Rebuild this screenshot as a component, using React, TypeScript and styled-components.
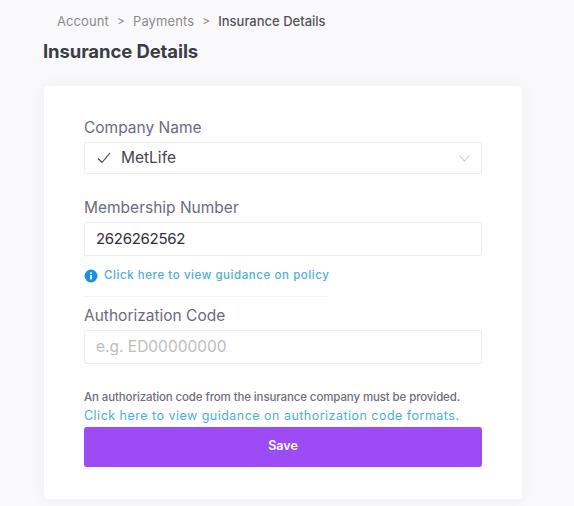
import React from "react";
import styled, { createGlobalStyle } from "styled-components";

const Global = createGlobalStyle`
  html, body { margin: 0; padding: 0; background: #f9f9fb; }
  body { font-family: "Inter", "Liberation Sans", sans-serif; -webkit-font-smoothing: antialiased; }
`;

const Page = styled.div`
  width: 574px;
  height: 506px;
  box-sizing: border-box;
  padding: 12px 52px 0 44px;
  overflow: hidden;
`;

const Breadcrumb = styled.nav`
  display: flex;
  align-items: center;
  height: 17px;
  padding-left: 13px;
  font-size: 13px;
  letter-spacing: 0.1px;
`;

const Crumb = styled.span<{ $current?: boolean }>`
  color: ${(p) => (p.$current ? "#55535a" : "#8f8b88")};
  font-weight: ${(p) => (p.$current ? 500 : 400)};
  letter-spacing: ${(p) => (p.$current ? "0" : "0.1px")};
`;

const Separator = styled.span`
  color: #8f8b88;
  margin: 0 8px;
  font-size: 12px;
`;

const Title = styled.h1`
  margin: 11px 0 24px -1px;
  font-size: 18.5px;
  line-height: 22px;
  font-weight: 650;
  color: #3d3d45;
  letter-spacing: -0.1px;
`;

const Card = styled.section`
  background: #fff;
  border-radius: 4px;
  box-shadow: 0 0 16px rgba(60, 60, 90, 0.05);
  padding: 30px 40px;
  height: 413px;
  box-sizing: border-box;
`;

const Label = styled.div`
  font-size: 15.5px;
  line-height: 24px;
  margin-bottom: 2px;
  font-weight: 400;
  color: #6c6b7b;
`;

const SelectBox = styled.div`
  height: 32px;
  box-sizing: border-box;
  border: 1px solid #ececf0;
  border-radius: 2px;
  display: flex;
  align-items: center;
  padding: 0 11px 0 12px;
  font-size: 15.5px;
  color: #45454c;
  margin-bottom: 22px;
`;

const SelectValue = styled.span`
  flex: 1;
  margin-left: 10px;
  padding-bottom: 2px;
`;

const Input = styled.input`
  display: block;
  width: 100%;
  height: 34px;
  box-sizing: border-box;
  border: 1px solid #ececf0;
  border-radius: 2px;
  padding: 0 11px 1px;
  font-family: inherit;
  font-size: 15px;
  letter-spacing: -0.3px;
  color: #2f2f36;
  background: #fff;
  outline: none;
  &::placeholder { color: #bdbdbd; opacity: 1; font-size: 15.5px; letter-spacing: 0; }
`;

const Guidance = styled.div`
  display: flex;
  align-items: center;
  gap: 6px;
  margin-top: 12px;
  font-size: 11.5px;
  font-weight: 500;
  letter-spacing: 0.57px;
  color: #4eaed6;
  line-height: 15px;
`;

const Divider = styled.div`
  width: 244px;
  height: 1px;
  background: #f6f6f8;
  margin: 13px 0 7px;
`;

const Note = styled.p`
  margin: 24px 0 0;
  font-size: 11.5px;
  line-height: 18px;
  font-weight: 500;
  letter-spacing: -0.12px;
  color: #6f6e78;
`;

const NoteLink = styled.a`
  display: block;
  font-size: 12.5px;
  line-height: 19px;
  letter-spacing: 0.48px;
  color: #4eaed6;
  font-weight: 400;
`;

const SaveButton = styled.button`
  display: block;
  width: 100%;
  height: 40px;
  margin-top: 2px;
  border: 0;
  border-radius: 3px;
  background: #9c4bf5;
  color: #fff;
  font-family: inherit;
  font-size: 12.5px;
  font-weight: 600;
  padding: 0 0 4px;
  box-shadow: 0 1px 2px rgba(60, 60, 90, 0.08);
`;

export default function App() {
  return (
    <Page>
      <Global />
      <Breadcrumb>
        <Crumb>Account</Crumb>
        <Separator>&gt;</Separator>
        <Crumb>Payments</Crumb>
        <Separator>&gt;</Separator>
        <Crumb $current>Insurance Details</Crumb>
      </Breadcrumb>
      <Title>Insurance Details</Title>
      <Card>
        <Label>Company Name</Label>
        <SelectBox>
          <svg width="14" height="12" viewBox="0 0 14 12" fill="none">
            <path d="M1 6.5 L5 10.5 L13 1" stroke="#3d3d45" strokeWidth="1.1" />
          </svg>
          <SelectValue>MetLife</SelectValue>
          <svg width="11" height="7" viewBox="0 0 11 7" fill="none">
            <path d="M0.5 0.5 L5.5 6 L10.5 0.5" stroke="#c9c9cc" strokeWidth="1.1" />
          </svg>
        </SelectBox>
        <Label>Membership Number</Label>
        <Input readOnly value="2626262562" />
        <Guidance>
          <svg width="14" height="14" viewBox="0 0 14 14">
            <circle cx="7" cy="7" r="6.5" fill="#1e8fe6" />
            <rect x="6.1" y="6" width="1.8" height="4.4" fill="#fff" />
            <rect x="6.1" y="3.4" width="1.8" height="1.7" fill="#fff" />
          </svg>
          Click here to view guidance on policy
        </Guidance>
        <Divider />
        <Label>Authorization Code</Label>
        <Input placeholder="e.g. ED00000000" />
        <Note>
          An authorization code from the insurance company must be provided.
          <NoteLink>Click here to view guidance on authorization code formats.</NoteLink>
        </Note>
        <SaveButton>Save</SaveButton>
      </Card>
    </Page>
  );
}
